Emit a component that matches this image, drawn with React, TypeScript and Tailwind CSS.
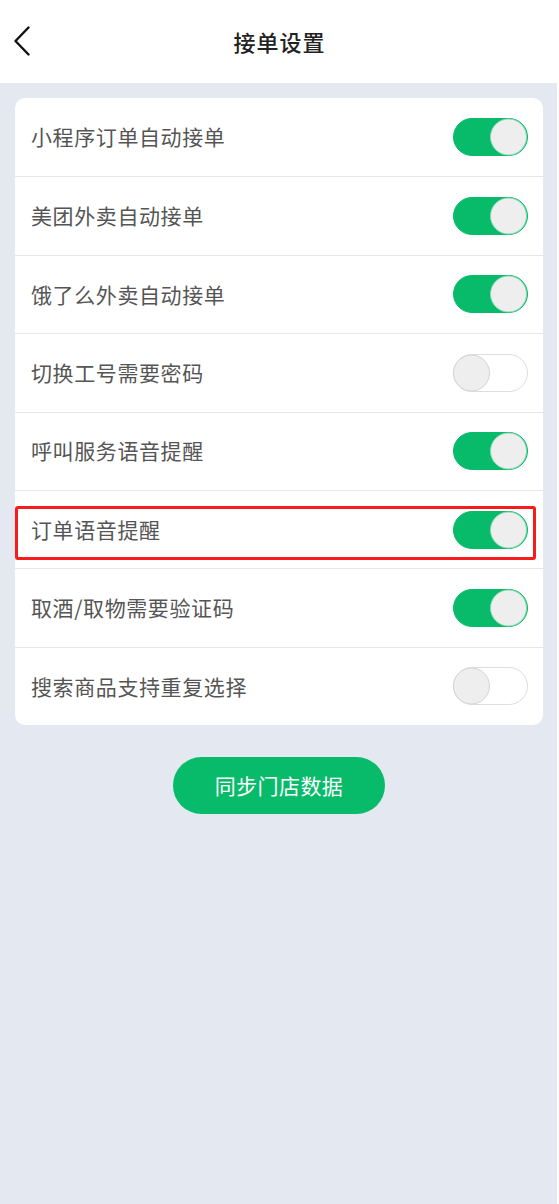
import React from "react";

const items: { label: string; on: boolean }[] = [
  { label: "小程序订单自动接单", on: true },
  { label: "美团外卖自动接单", on: true },
  { label: "饿了么外卖自动接单", on: true },
  { label: "切换工号需要密码", on: false },
  { label: "呼叫服务语音提醒", on: true },
  { label: "订单语音提醒", on: true },
  { label: "取酒/取物需要验证码", on: true },
  { label: "搜索商品支持重复选择", on: false },
];

function Toggle({ on }: { on: boolean }) {
  return on ? (
    <div className="relative w-[75px] h-[38px] rounded-full bg-[#07bb6b] border border-[#07bb6b]">
      <div className="absolute right-0 top-1/2 -translate-y-1/2 w-[37px] h-[37px] rounded-full bg-[#eeeeee] border border-[#8fd9b5]" />
    </div>
  ) : (
    <div className="relative w-[75px] h-[38px] rounded-full bg-white border border-[#dddddd]">
      <div className="absolute left-[-1px] top-1/2 -translate-y-1/2 w-[37px] h-[37px] rounded-full bg-[#eeeeee] border border-[#d4d4d4]" />
    </div>
  );
}

export default function App() {
  return (
    <div
      className="w-[559px] h-[1204px] bg-white flex flex-col"
      style={{ fontFamily: '"Noto Sans CJK SC", "Noto Sans", sans-serif' }}
    >
      <div className="h-[83px] shrink-0 bg-white relative flex items-center justify-center">
        <div className="absolute left-[13px] top-[26px]">
          <svg width="18" height="30" viewBox="0 0 18 30" fill="none">
            <path d="M15.5 1.5 L2.5 15 L15.5 28.5" stroke="#111" strokeWidth="2.4" strokeLinecap="round" strokeLinejoin="round" />
          </svg>
        </div>
        <div className="text-[22px] font-medium text-[#222] tracking-[1px]">接单设置</div>
      </div>
      <div className="w-[557px] flex-1 bg-[#e4e9f1] pt-[15px] pl-[15px] pr-[14px] flex flex-col">
        <div className="bg-white rounded-[10px] overflow-hidden">
          {items.map((it, i) => (
            <div
              key={i}
              className={`relative h-[78.375px] flex items-center justify-between pl-[16px] pr-[15px] ${i > 0 ? "border-t border-[#e6e6e6]" : ""}`}
            >
              <span className="text-[21px] text-[#555555] tracking-[0.6px]">{it.label}</span>
              <Toggle on={it.on} />
              {it.label === "订单语音提醒" && (
                <div className="absolute left-0 right-[7px] top-[15px] h-[54px] border-[3px] border-[#f81b1b] rounded-[3px] pointer-events-none" />
              )}
            </div>
          ))}
        </div>
        <div className="flex justify-center mt-[32px]">
          <button className="w-[212px] h-[57px] rounded-full bg-[#07bb6b] text-white text-[21px] tracking-[0.4px]">
            同步门店数据
          </button>
        </div>
      </div>
    </div>
  );
}
